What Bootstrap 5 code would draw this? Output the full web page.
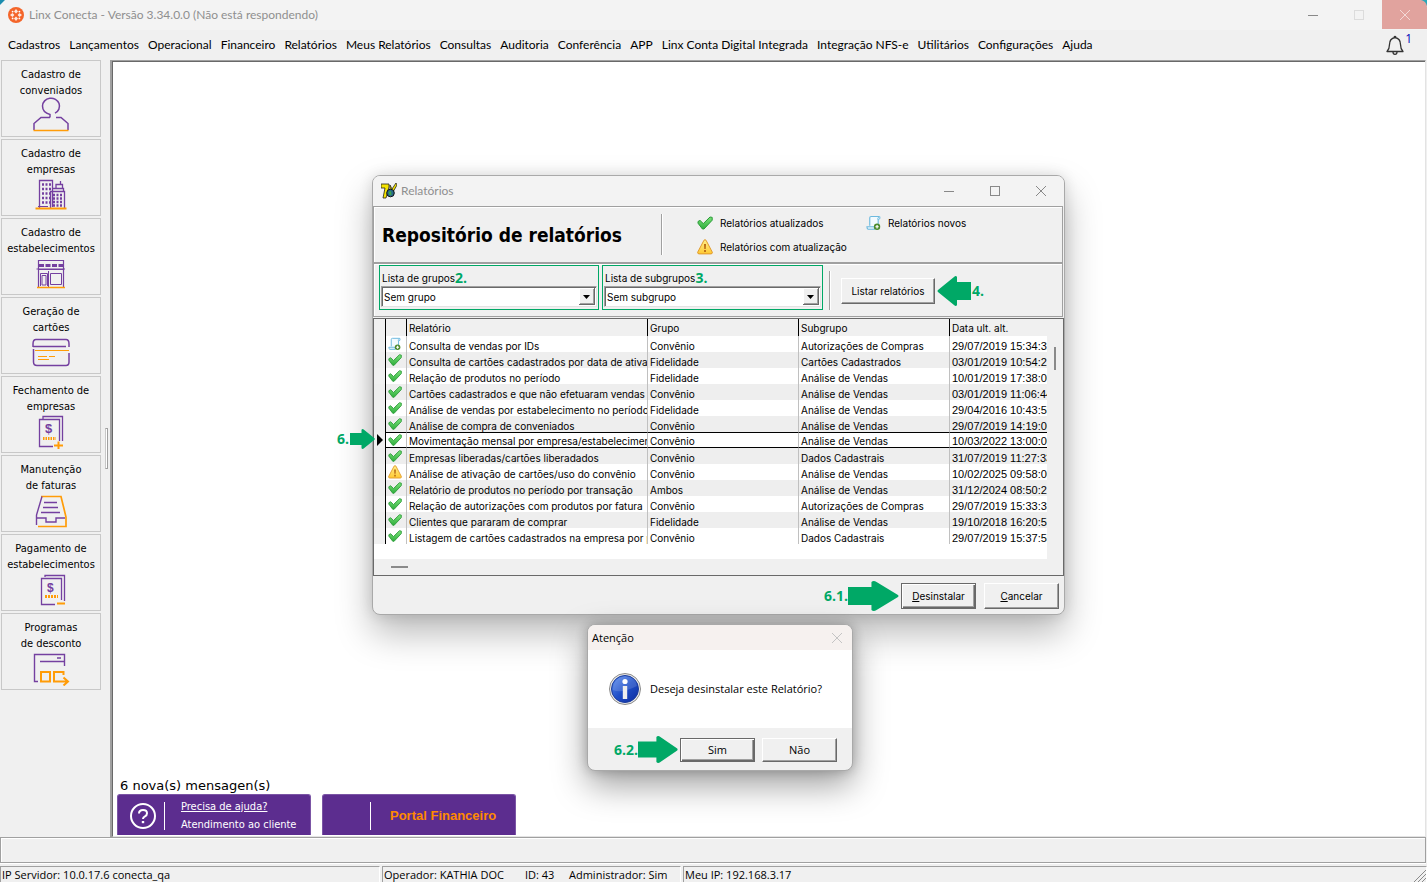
<!DOCTYPE html>
<html lang="pt-BR">
<head>
<meta charset="utf-8">
<meta name="viewport" content="width=device-width, initial-scale=1">
<title>Linx Conecta</title>
<link rel="stylesheet" href="https://cdn.jsdelivr.net/npm/bootstrap@5.3.0/dist/css/bootstrap.min.css">
<style>
:root{--face:#f0f0f0;--shade:#a0a0a0;--dark:#696969;--mark:#00a866;--ui:"Open Sans","Noto Sans",sans-serif;--title:Lato,"Open Sans",sans-serif;--tahoma:"DejaVu Sans Condensed","DejaVu Sans",sans-serif;--grid:Inter,"Liberation Sans",sans-serif}
body{background:var(--face);color:#000;font:11px/16px var(--ui);height:100vh;overflow:hidden}
svg{display:block;flex:none}
.corners{background:linear-gradient(135deg,#1b8cae 3px,transparent 4px),linear-gradient(225deg,#2aa7b8 4px,transparent 5px),#f3f3f3}
.app-title{height:30px;font:12px/16px var(--title);color:#8f8f8f;padding-left:8px;gap:5px}
.caption-btn{border:0;background:none;padding:0;width:46px;height:29px;display:flex;align-items:center;justify-content:center;color:#888}
.caption-btn.closing{width:45px;background:#e1a39e;color:#f3d9d7;border-top-right-radius:7px}
.menu{height:30px;font:12px/16px var(--title);padding:0 15px 0 8px;gap:9px}
.menu a{color:#000;text-decoration:none;white-space:nowrap}
.menu .bell-count{color:#0000b8;font:12px/12px var(--ui);padding-bottom:12px}
.side{width:110px;gap:2px;position:relative;flex:none}
.side-btn{width:100px;height:77px;margin-left:1px;border:1px solid #c8c8c8;background:var(--face);padding:6px 0 0;font:11px/16px var(--tahoma);color:#000;display:flex;flex-direction:column;align-items:center;white-space:nowrap}
.side-btn svg{margin-top:-2px}
.grip{position:absolute;left:105px;top:368px;width:3px;height:41px;border:1px solid var(--shade);border-left-color:#c8c8c8;background:#fff}
.desk-edge{border-left:2px solid var(--shade);border-top:1px solid var(--shade);border-right:1px solid #e3e3e3;margin-right:1px;min-width:0}
.desk{background:#fff;border-left:1px solid var(--dark);border-top:1px solid var(--dark);border-bottom:1px solid #e3e3e3;padding-bottom:1px}
.msgs{font:13px/16px "DejaVu Sans",sans-serif;padding-left:7px}
.promo{width:194px;height:41px;background:#5c2d8f;border:1px solid #7b55a5;border-bottom:0;border-radius:3px 3px 0 0;color:#fff;font:11px/18px var(--tahoma);text-decoration:none;padding:2px 0 0 12px}
.promo .bar{width:1px;height:28px;background:#fff}
.portal{color:#ff8a00;font:bold 13px/18px "Liberation Sans",sans-serif}
.promo-portal{padding-left:47px;gap:19px}
.hint-panel{height:26px;border:1px solid var(--shade);box-shadow:inset 1px 1px #fff,0 1px #fff;margin:0 1px 3px 0}
.status{height:16px}
.status>div{border-top:1px solid var(--shade);border-left:1px solid var(--shade);border-right:1px solid #fff;white-space:pre;padding-left:1px;line-height:15px;height:16px;overflow:hidden;margin-right:2px}
.win{position:absolute;background:var(--face);border:1px solid #a9a9a9;border-radius:8px}
.win-report{left:259px;top:113px;width:693px;height:440px;box-shadow:0 18px 36px rgba(0,0,0,.28),0 0 14px rgba(0,0,0,.12);font:10px/16px var(--grid)}
.win-ask{left:474px;top:562px;width:266px;height:147px;box-shadow:0 14px 34px rgba(0,0,0,.38),0 0 12px rgba(0,0,0,.22)}
.win-head{height:30px;background:#f3f3f3;border-radius:7px 7px 0 0;font:12px/16px var(--title);color:#8f8f8f;padding-left:8px}
.panel{border:1px solid var(--shade);box-shadow:inset 1px 1px #fff;margin-right:1px}
.panel-top{height:57px;padding-left:8px}
.panel-top h1{font:bold 19px/24px var(--tahoma);margin:0;width:279px}
.vsep{width:2px;border-left:1px solid var(--shade);border-right:1px solid #fff}
.legend-grid{display:grid;grid-template-columns:169px auto;row-gap:8px;margin-left:34px}
.legend-grid span{gap:7px}
.panel-filter{height:54px;padding:1px 0 0 5px}
.pick{border:1px solid var(--mark);width:220px;height:45px;padding:4px 1px 0}
.pick + .pick{margin-left:3px;width:221px}
.pick label{padding-left:1px;line-height:16px}
.step{color:var(--mark);font:bold 14px/16px var(--ui)}
.combo{appearance:none;width:100%;height:21px;border:1px solid;border-color:var(--shade) #e3e3e3 #e3e3e3 var(--shade);border-radius:0;box-shadow:inset 1px 1px var(--dark);padding:0 2px;background:#fff;color:#000;font:10px/18px var(--grid);display:block}
.combo-wrap{position:relative}
.combo-wrap svg{position:absolute;right:2px;top:2px;pointer-events:none}
.filter-go{padding-left:6px}
.filter-go .vsep{margin-right:10px}
.btn3d{height:26px;width:75px;background:var(--face);border:1px solid;border-color:#fff var(--dark) var(--dark) #fff;box-shadow:inset -1px -1px var(--shade);padding:0;color:#000;font:inherit;border-radius:0}
.btn3d.primary{border-color:var(--dark);box-shadow:inset 1px 1px #fff,inset -1px -1px var(--dark),inset -2px -2px var(--shade)}
.btn3d.wide{width:94px;margin-right:2px}
.actions{padding:5px 5px 0 0;gap:8px}
.cue{display:flex;align-items:center;margin-right:2px}
.sheet{height:258px;border:1px solid var(--dark);margin-top:1px;position:relative}
.sheet-view{width:673px;height:240px;background:#fff;overflow:hidden}
.rep{table-layout:fixed;width:673px;border-collapse:separate;border-spacing:0}
.rep th,.rep td{height:16px;padding:4px 0 0 2px;line-height:12px;font-weight:400;white-space:nowrap;overflow:hidden;border-right:1px solid silver}
.rep th{height:17px;padding-top:2px;line-height:15px;background:var(--face);border-right-color:#000}
.rep td:first-child,.rep th:first-child{background:var(--face);border-right-color:#000;padding:0}
.rep td:nth-child(2){padding:0 0 0 2px}
.rep td:last-child,.rep th:last-child{border-right:0}
.rep td:last-child{font-family:"Liberation Sans",sans-serif;font-size:11px}
.rep tbody tr:nth-child(even) td{background:#eee}
.rep tr.current td:not(:first-child){border-top:1px solid #000;border-bottom:1px solid #000;line-height:11px}
.rep tr.current td:nth-child(n+3){padding-top:3px}
.vthumb{position:absolute;left:680px;top:28px;width:2px;height:23px;background:#8a8a8a}
.hthumb{position:absolute;left:17px;top:247px;width:17px;height:2px;background:#8a8a8a}
.row-mark{position:absolute;left:-36px;top:253px;gap:1px}
.ask-head{height:25px;background:#f6f1ef;border-radius:7px 7px 0 0;color:#000;padding:0 3px 0 4px}
.ask-head .caption-btn{width:24px;height:24px;color:#c4c4c4}
.ask-body{height:78px;background:#fff;padding-left:21px;gap:9px}
.ask-actions{padding:8px 15px 0 0;gap:7px}
.ask-actions .btn3d{height:24px}
</style>
</head>
<body class="d-flex flex-column">
<svg width="0" height="0" class="position-absolute" aria-hidden="true">
<defs>
<linearGradient id="gOk" x1="0" y1="0" x2="0" y2="1"><stop offset="0" stop-color="#7be27b"/><stop offset="1" stop-color="#2fae3c"/></linearGradient>
<linearGradient id="gWarn" x1="0" y1="0" x2="0" y2="1"><stop offset="0" stop-color="#ffef8a"/><stop offset="1" stop-color="#ffc933"/></linearGradient>
<linearGradient id="gInfo" x1="0" y1="0" x2="1" y2="1"><stop offset="0" stop-color="#5d8ff0"/><stop offset=".5" stop-color="#1f4fc8"/><stop offset="1" stop-color="#0c2a9c"/></linearGradient>
<symbol id="ok" viewBox="0 0 16 16"><path d="M1 8.2V6.500L3 5.400 6.300 8.600 13 2 15.200 2.400V5.200L7 14H5.400Z" fill="url(#gOk)" stroke="#2a9a38"/></symbol>
<symbol id="warn" viewBox="0 0 16 16"><path d="M7 1.2Q8 .2 9 1.2L15.3 13.2Q15.5 14.9 14 14.9H2Q.5 14.9 .7 13.2Z" fill="url(#gWarn)" stroke="#e0992c"/><path d="M7 5h2l-.3 5H7.3ZM7.1 11h1.8v2H7.1Z" fill="#b86a14"/></symbol>
<symbol id="fresh" viewBox="0 0 16 16"><path d="M4 11V2.5Q4 1 5.5 1H14.5Q13 1.5 13 3V13.5" fill="#f2fafe" stroke="#6db9de" stroke-width="1.2"/><path d="M12 3.5Q13.2 4.8 14.8 3.4V1.2" fill="#d8effa" stroke="#6db9de"/><path d="M1 12H9V14.6H2.2Q1 14.2 1 12Z" fill="#e4f4fc" stroke="#6db9de" stroke-width="1.2"/><circle cx="11.8" cy="12" r="3.4" fill="#4b8a2c"/><path d="M11.8 10.2v3.6M10 12h3.6" stroke="#fff" stroke-width="1.3"/></symbol>
<symbol id="cross" viewBox="0 0 12 12"><path d="M1 1 11 11M11 1 1 11" stroke="currentColor" fill="none"/></symbol>
<symbol id="arrow" viewBox="0 0 50 30" preserveAspectRatio="none"><path d="M0 6H23V1Q25 -1 28 1L49 14Q50 15 49 16L28 29Q25 31 23 29V24H0Z" fill="#00a866"/></symbol>
<symbol id="drop" viewBox="0 0 16 17"><path d="M0 0H16V17H0Z" fill="#696969"/><path d="M0 0H15V16H0Z" fill="#fff"/><path d="M1 1H15V16H1Z" fill="#a0a0a0"/><path d="M1 1H14V15H1Z" fill="#f0f0f0"/><path d="M4 7H11L7.5 11Z"/></symbol>
</defs>
</svg>

<header class="app-title corners d-flex align-items-center">
  <svg width="16" height="16" viewBox="0 0 16 16"><circle cx="8" cy="8" r="8" fill="#f4652a"/><g fill="#fff"><path d="M8 2 10 4.5 8 6.4 6 4.5ZM8 9.6 10 11.5 8 14 6 11.5ZM2 8 4.5 6 6.4 8 4.5 10ZM9.6 8 11.5 6 14 8 11.5 10Z" opacity=".85"/><circle cx="4.6" cy="4.6" r=".9"/><circle cx="11.4" cy="4.6" r=".9"/><circle cx="4.6" cy="11.4" r=".9"/><circle cx="11.4" cy="11.4" r=".9"/></g></svg>
  <span>Linx Conecta - Versão 3.34.0.0 (Não está respondendo)</span>
  <div class="d-flex ms-auto align-self-start">
    <button class="caption-btn" aria-label="Minimizar"><svg width="12" height="12"><path d="M1 6.5H11" stroke="#888"/></svg></button>
    <button class="caption-btn" aria-label="Maximizar"><svg width="12" height="12"><rect x="1.5" y="1.5" width="9" height="9" fill="none" stroke="#dcdcdc"/></svg></button>
    <button class="caption-btn closing" aria-label="Fechar"><svg width="12" height="12"><use href="#cross"/></svg></button>
  </div>
</header>

<nav class="menu d-flex align-items-center">
  <a href="#">Cadastros</a><a href="#">Lançamentos</a><a href="#">Operacional</a><a href="#">Financeiro</a><a href="#">Relatórios</a><a href="#">Meus Relatórios</a><a href="#">Consultas</a><a href="#">Auditoria</a><a href="#">Conferência</a><a href="#">APP</a><a href="#">Linx Conta Digital Integrada</a><a href="#">Integração NFS-e</a><a href="#">Utilitários</a><a href="#">Configurações</a><a href="#">Ajuda</a>
  <a href="#" class="ms-auto d-flex align-items-center" aria-label="Mensagens"><svg width="20" height="20" viewBox="0 0 20 20" fill="none" stroke="#333" stroke-width="1.3"><path d="M2 16.5Q4.5 14 4.5 9.500 4.500 3.500 10 2.500 15.500 3.500 15.500 9.500 15.500 14 18 16.500Z" stroke-linejoin="round"/><path d="M9 2.200Q10 .4 11 2.200M8 17Q8 19.300 10 19.300 12 19.300 12 17"/></svg><span class="bell-count">1</span></a>
</nav>

<div class="d-flex flex-fill" style="min-height:0">
  <aside class="side d-flex flex-column">
    <button class="side-btn"><span>Cadastro de</span><span>conveniados</span>
      <svg width="38" height="36" viewBox="0 0 38 36" fill="none" stroke="#7440a0" stroke-width="1.500"><path d="M18 20.500V17.500Q10.500 15.500 10.500 9A8.500 8 0 1 1 23 16.200M18 20.500H9L2 26.500V33M24 20.500H29L36 26.500V33"/><path d="M1.500 33.500H36.500" stroke="#ff9c08"/></svg></button>
    <button class="side-btn"><span>Cadastro de</span><span>empresas</span>
      <svg width="38" height="36" viewBox="0 0 38 36" fill="none" stroke="#7440a0"><path d="M7.500 32V4.500H20.500V31M20.500 12.500H31.500V15M24 12V8.500H30.500V12M28.500 8V5M18.500 32V15.500H32.500V32" stroke-width="1.300"/><path d="M10 8.500H19M10 13H19M10 17.500H18M10 22H18M10 26.500H18M21 19H31M21 22.500H31M21 26H31M21 29.500H31" stroke-width="2.400" stroke-dasharray="2 1.500"/><path d="M6 30.500H16"/><path d="M3.500 32.500H34.500" stroke="#ff9c08" stroke-width="2"/></svg></button>
    <button class="side-btn"><span>Cadastro de</span><span>estabelecimentos</span>
      <svg width="38" height="36" viewBox="0 0 38 36" fill="none" stroke="#7440a0"><path d="M6.500 32V5.500H31.500V32M6 14.500H32M4.500 14H33" stroke-width="1.200"/><path d="M7 10.500H31" stroke-width="3" stroke-dasharray="5 1.500"/><path d="M8.500 31V18.500H15.500V31M10 20.500H14V30H10ZM18.500 18.500H29.500V29.500H18.500ZM16.500 16V32"/><path d="M5 32.500H33" stroke="#ff9c08" stroke-width="1.500"/></svg></button>
    <button class="side-btn"><span>Geração de</span><span>cartões</span>
      <svg width="38" height="36" viewBox="0 0 38 36" fill="none" stroke="#7440a0" stroke-width="1.500"><path d="M1 13V10Q1 5.500 4 5.500H34Q37 5.500 37 10V13M1 12.500H34M1.500 15V28Q1.500 31.500 5 31.500H34Q37 31.500 37 28V19"/><path d="M3 16.500H37M6 22.500H15M17 22.500H23M6 25.500H17" stroke="#ff9c08" stroke-width="1.200"/></svg></button>
    <button class="side-btn"><span>Fechamento de</span><span>empresas</span>
      <svg width="38" height="36" viewBox="0 0 38 36" fill="none" stroke="#7440a0" stroke-width="1.300"><path d="M11 6V3.500H30.500V28M21 33.500H7.500V6.500H27.500V28"/><text x="13" y="20" font-family="Liberation Sans" font-size="13" font-weight="bold" fill="#7440a0" stroke="none">$</text><path d="M11 25.500H24" stroke="#ff9c08" stroke-width="3" stroke-dasharray="1.500 1"/><path d="M26.500 28.500V36M22 32.500H31" stroke="#ff9c08" stroke-width="2"/></svg></button>
    <button class="side-btn"><span>Manutenção</span><span>de faturas</span>
      <svg width="38" height="36" viewBox="0 0 38 36" fill="none" stroke="#7440a0" stroke-width="1.400"><path d="M9 4.500H29L34 25V34.500H6" stroke="#ff9c08" stroke-width="1.700"/><path d="M10 4.500 4.500 23V33M4.500 26H14V30H24V26H33M12 10.500H25M11 15.500H26M9 20.500H28"/></svg></button>
    <button class="side-btn"><span>Pagamento de</span><span>estabelecimentos</span>
      <svg width="38" height="36" viewBox="0 0 38 36" fill="none" stroke="#7440a0" stroke-width="1.300"><path d="M13 6V4.500H32.500V30M23 33.500H9.500V7.500H29.500V29"/><text x="15" y="21" font-family="Liberation Sans" font-size="12" font-weight="bold" fill="#7440a0" stroke="none">$</text><path d="M13 25.500H26" stroke="#ff9c08" stroke-width="3" stroke-dasharray="2 1"/><path d="M25 32.500H33" stroke="#ff9c08" stroke-width="2"/></svg></button>
    <button class="side-btn"><span>Programas</span><span>de desconto</span>
      <svg width="38" height="36" viewBox="0 0 38 36" fill="none" stroke="#7440a0" stroke-width="1.400"><path d="M6 31.500H2.500V4.500H32.500V16M8 11.500H32M25 8H29"/><path d="M9 22H18V31.500H9ZM29 31.500H22V22H31.500V25M26 31.500H35M31.500 27.500 36 31.500 31.500 35.500" stroke="#ff9c08" stroke-width="2"/></svg></button>
    <span class="grip"></span>
  </aside>

  <main class="desk-edge flex-fill d-flex">
    <div class="desk flex-fill position-relative d-flex flex-column justify-content-end">
      <div class="msgs">6 nova(s) mensagen(s)</div>
      <div class="d-flex ps-1" style="column-gap:11px">
        <a href="#" class="promo d-flex align-items-center">
          <svg width="26" height="26" viewBox="0 0 26 26" fill="none" stroke="#fff" stroke-width="2"><circle cx="13" cy="13" r="12"/><path d="M9 10.500Q9 7 13 7 17 7 17 10.300 17 12.300 15 13.300 13 14.300 13 16"/><path d="M13 18V20.200" stroke-width="2.400"/></svg>
          <span class="bar ms-2 me-3"></span>
          <span class="d-flex flex-column"><u>Precisa de ajuda?</u><span>Atendimento ao cliente</span></span>
        </a>
        <a href="#" class="promo promo-portal d-flex align-items-center"><span class="bar"></span><span class="portal">Portal Financeiro</span></a>
      </div>

      <section class="win win-report" aria-label="Relatórios">
        <div class="win-head d-flex align-items-center">
          <svg width="16" height="16" viewBox="0 0 16 16"><path d="M0 1H8V4L5 15H2L4 5H0Z" fill="#f5e400" stroke="#222" stroke-width=".8"/><path d="M9 2 11 6 15 0 16 2 12 9H9Z" fill="#f5e400" stroke="#222" stroke-width=".8"/><circle cx="9.500" cy="10" r="3.800" fill="#276a8a" stroke="#111"/><path d="M7.500 9 10 8 10.500 12 8.500 12Z" fill="#3fa648"/></svg>
          <span class="ms-1">Relatórios</span>
          <div class="d-flex ms-auto">
            <button class="caption-btn" aria-label="Minimizar"><svg width="12" height="12"><path d="M1 6.500H11" stroke="#888"/></svg></button>
            <button class="caption-btn" aria-label="Maximizar"><svg width="12" height="12"><rect x="1.500" y="1.500" width="9" height="9" fill="none" stroke="#888"/></svg></button>
            <button class="caption-btn" aria-label="Fechar"><svg width="12" height="12"><use href="#cross"/></svg></button>
          </div>
        </div>
        <div class="panel panel-top d-flex align-items-center">
          <h1>Repositório de relatórios</h1>
          <span class="vsep h-75"></span>
          <div class="legend-grid">
            <span class="d-flex"><svg width="16" height="16"><use href="#ok"/></svg>Relatórios atualizados</span>
            <span class="d-flex"><svg width="15" height="16"><use href="#fresh"/></svg>Relatórios novos</span>
            <span class="d-flex"><svg width="16" height="16"><use href="#warn"/></svg>Relatórios com atualização</span>
          </div>
        </div>
        <div class="panel panel-filter d-flex">
          <div class="pick">
            <div class="d-flex"><label for="grp">Lista de grupos</label><span class="step">2.</span></div>
            <div class="combo-wrap"><select id="grp" class="combo"><option>Sem grupo</option></select><svg width="16" height="17"><use href="#drop"/></svg></div>
          </div>
          <div class="pick">
            <div class="d-flex"><label for="sub">Lista de subgrupos</label><span class="step">3.</span></div>
            <div class="combo-wrap"><select id="sub" class="combo"><option>Sem subgrupo</option></select><svg width="16" height="17"><use href="#drop"/></svg></div>
          </div>
          <div class="filter-go d-flex align-items-center">
            <span class="vsep h-75"></span>
            <button class="btn3d wide">Listar relatórios</button>
            <svg width="35" height="30" viewBox="0 0 35 30"><path d="M1 14 17 1Q19-1 20 1V6H34V24H20V29Q19 31 17 29L1 16Q0 15 1 14Z" fill="#00a866"/></svg>
            <span class="step">4.</span>
          </div>
        </div>
        <div class="sheet">
          <div class="sheet-view">
            <table class="rep">
              <colgroup><col style="width:12px"><col style="width:21px"><col style="width:241px"><col style="width:151px"><col style="width:151px"><col style="width:97px"></colgroup>
              <thead><tr><th></th><th></th><th>Relatório</th><th>Grupo</th><th>Subgrupo</th><th>Data ult. alt.</th></tr></thead>
              <tbody>
              <tr><td></td><td><svg width="13" height="14"><use href="#fresh"/></svg></td><td>Consulta de vendas por IDs</td><td>Convênio</td><td>Autorizações de Compras</td><td>29/07/2019 15:34:32</td></tr>
              <tr><td></td><td><svg width="14" height="14"><use href="#ok"/></svg></td><td>Consulta de cartões cadastrados por data de ativação</td><td>Fidelidade</td><td>Cartões Cadastrados</td><td>03/01/2019 10:54:22</td></tr>
              <tr><td></td><td><svg width="14" height="14"><use href="#ok"/></svg></td><td>Relação de produtos no período</td><td>Fidelidade</td><td>Análise de Vendas</td><td>10/01/2019 17:38:00</td></tr>
              <tr><td></td><td><svg width="14" height="14"><use href="#ok"/></svg></td><td>Cartões cadastrados e que não efetuaram vendas</td><td>Convênio</td><td>Análise de Vendas</td><td>03/01/2019 11:06:44</td></tr>
              <tr><td></td><td><svg width="14" height="14"><use href="#ok"/></svg></td><td>Análise de vendas por estabelecimento no período</td><td>Fidelidade</td><td>Análise de Vendas</td><td>29/04/2016 10:43:55</td></tr>
              <tr><td></td><td><svg width="14" height="14"><use href="#ok"/></svg></td><td>Análise de compra de conveniados</td><td>Convênio</td><td>Análise de Vendas</td><td>29/07/2019 14:19:00</td></tr>
              <tr class="current"><td><svg width="9" height="12" viewBox="0 0 9 12"><path d="M3 0 9 6 3 12Z"/></svg></td><td><svg width="14" height="14"><use href="#ok"/></svg></td><td>Movimentação mensal por empresa/estabelecimento</td><td>Convênio</td><td>Análise de Vendas</td><td>10/03/2022 13:00:00</td></tr>
              <tr><td></td><td><svg width="14" height="14"><use href="#ok"/></svg></td><td>Empresas liberadas/cartões liberadados</td><td>Convênio</td><td>Dados Cadastrais</td><td>31/07/2019 11:27:33</td></tr>
              <tr><td></td><td><svg width="14" height="14"><use href="#warn"/></svg></td><td>Análise de ativação de cartões/uso do convênio</td><td>Convênio</td><td>Análise de Vendas</td><td>10/02/2025 09:58:00</td></tr>
              <tr><td></td><td><svg width="14" height="14"><use href="#ok"/></svg></td><td>Relatório de produtos no período por transação</td><td>Ambos</td><td>Análise de Vendas</td><td>31/12/2024 08:50:22</td></tr>
              <tr><td></td><td><svg width="14" height="14"><use href="#ok"/></svg></td><td>Relação de autorizações com produtos por fatura</td><td>Convênio</td><td>Autorizações de Compras</td><td>29/07/2019 15:33:33</td></tr>
              <tr><td></td><td><svg width="14" height="14"><use href="#ok"/></svg></td><td>Clientes que pararam de comprar</td><td>Fidelidade</td><td>Análise de Vendas</td><td>19/10/2018 16:20:55</td></tr>
              <tr><td></td><td><svg width="14" height="14"><use href="#ok"/></svg></td><td>Listagem de cartões cadastrados na empresa por período</td><td>Convênio</td><td>Dados Cadastrais</td><td>29/07/2019 15:37:55</td></tr>
              </tbody>
            </table>
          </div>
          <span class="vthumb"></span><span class="hthumb"></span>
        </div>
        <div class="actions d-flex justify-content-end align-items-center">
          <div class="d-flex align-items-center">
            <span class="cue"><span class="step">6.1.</span><svg width="51" height="30"><use href="#arrow"/></svg></span>
            <button class="btn3d primary"><u>D</u>esinstalar</button>
          </div>
          <button class="btn3d"><u>C</u>ancelar</button>
        </div>
        <div class="row-mark d-flex align-items-center"><span class="step">6.</span><svg width="25" height="20"><use href="#arrow"/></svg></div>
      </section>

      <section class="win win-ask" aria-label="Atenção">
        <div class="ask-head d-flex align-items-center justify-content-between"><span>Atenção</span><button class="caption-btn" aria-label="Fechar"><svg width="12" height="12"><use href="#cross"/></svg></button></div>
        <div class="ask-body d-flex align-items-center">
          <svg width="32" height="32" viewBox="0 0 32 32"><circle cx="16" cy="16" r="15.500" fill="#e8e8e8" stroke="#8a8a8a"/><circle cx="16" cy="16" r="13.500" fill="url(#gInfo)" stroke="#1b3c9c"/><path d="M4 17Q12 21 28 13 27 4 16 3 4 5 4 17Z" fill="#fff" opacity=".14"/><circle cx="16" cy="8.500" r="2.600" fill="#fff"/><path d="M13.800 13H18.200V26H13.800Z" fill="#eee"/></svg>
          <span>Deseja desinstalar este Relatório?</span>
        </div>
        <div class="ask-actions d-flex align-items-center justify-content-end">
          <div class="d-flex align-items-center">
            <span class="cue"><span class="step">6.2.</span><svg width="40" height="27"><use href="#arrow"/></svg></span>
            <button class="btn3d primary">Sim</button>
          </div>
          <button class="btn3d">Não</button>
        </div>
      </section>
    </div>
  </main>
</div>

<div class="hint-panel"></div>
<footer class="status d-flex">
  <div style="width:380px">IP Servidor: 10.0.17.6 conecta_qa</div>
  <div class="d-flex" style="width:299px"><span style="width:141px">Operador: KATHIA DOC</span><span style="width:44px">ID: 43</span><span>Administrador: Sim</span></div>
  <div class="flex-fill d-flex justify-content-between me-0">Meu IP: 192.168.3.17<svg width="12" height="15" viewBox="0 0 12 15" stroke="#8a8a8a"><path d="M0 15 12 3M4 15 12 7M8 15 12 11"/></svg></div>
</footer>
<script src="https://cdn.jsdelivr.net/npm/bootstrap@5.3.0/dist/js/bootstrap.bundle.min.js"></script>
</body>
</html>
